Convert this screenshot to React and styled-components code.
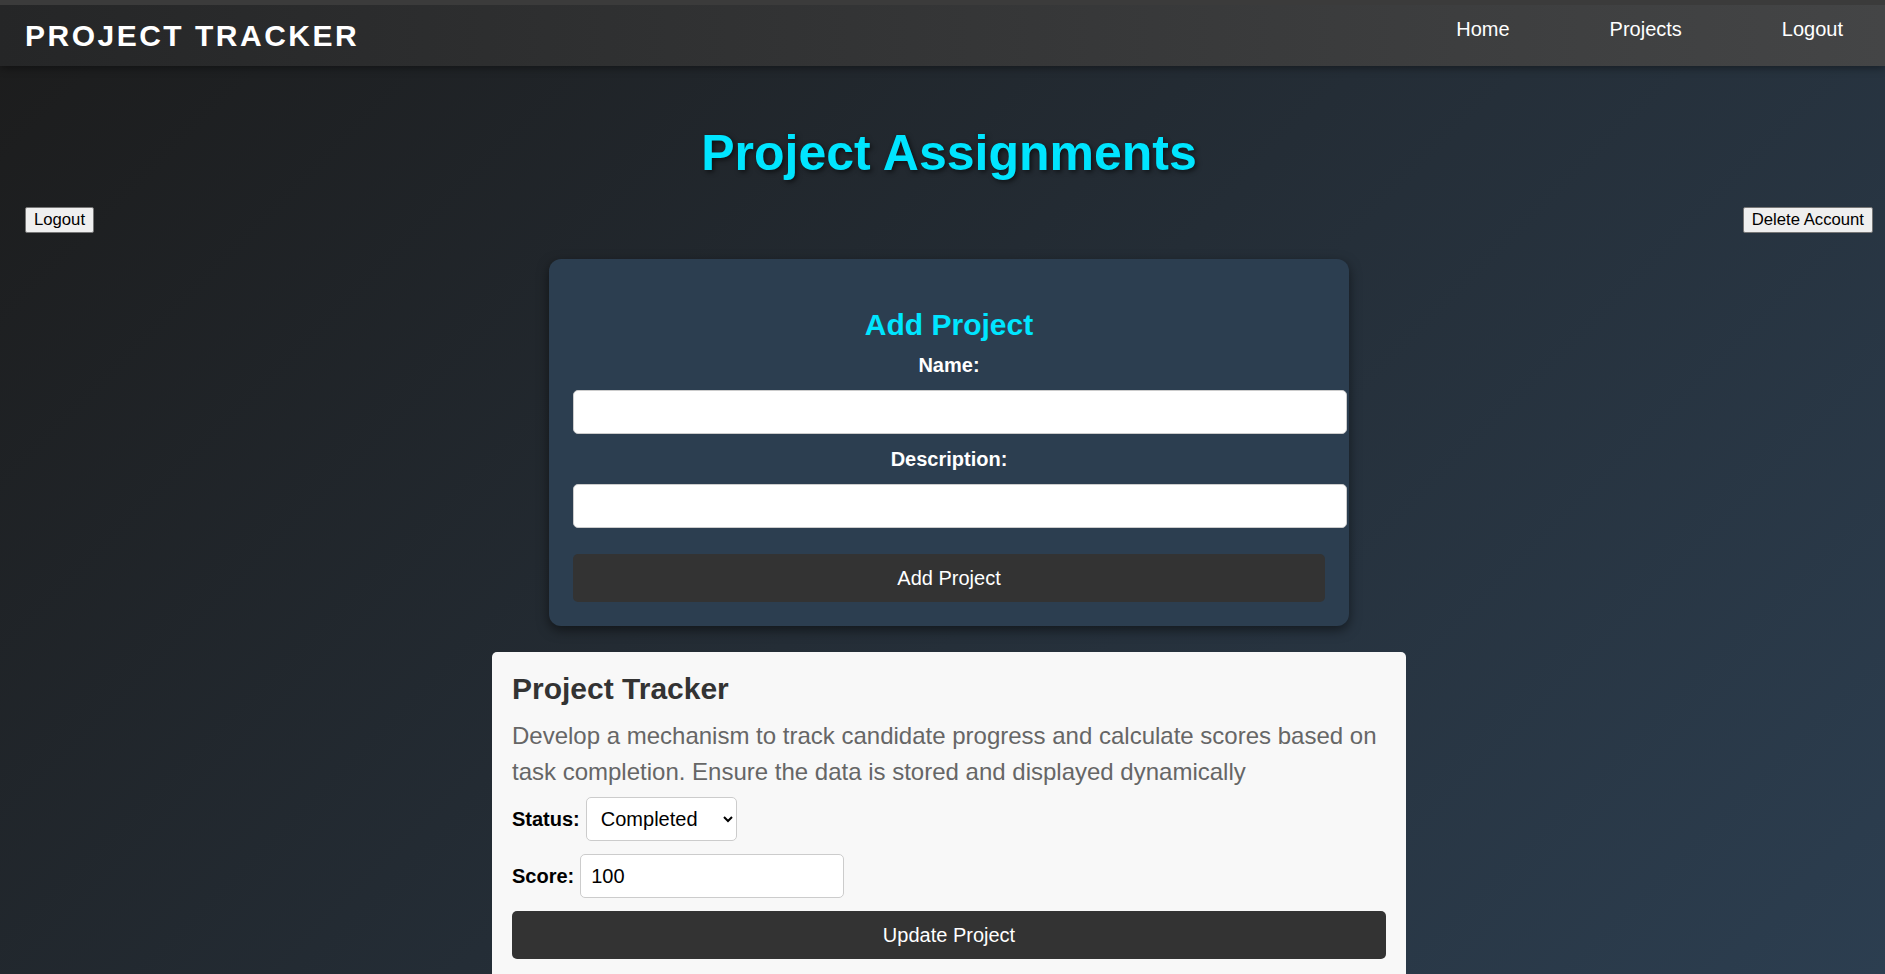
import React, { useState } from 'react'
import styled, { createGlobalStyle } from 'styled-components';

const GlobalStyle = createGlobalStyle`
  body {
    margin: 0;
    min-height: 100vh;
    font-family: "Liberation Sans", Arial, sans-serif;
    background: linear-gradient(135deg, #1c1c1c 0%, #2c3e50 100%);
    background-attachment: fixed;
  }
`;

function App() {
  const [status, setStatus] = useState('Completed');
  const [score, setScore] = useState('100');

  return (
    <>
      <GlobalStyle />
      <NavBar>
        <Brand>PROJECT TRACKER</Brand>
        <NavLinks>
          <a href="#home">Home</a>
          <a href="#projects">Projects</a>
          <a href="#logout">Logout</a>
        </NavLinks>
      </NavBar>
      <Main>
        <PageTitle>Project Assignments</PageTitle>
        <ActionRow>
          <PlainButton>Logout</PlainButton>
          <PlainButton>Delete Account</PlainButton>
        </ActionRow>

        <AddCard>
          <h2>Add Project</h2>
          <label htmlFor="name">Name:</label>
          <TextField id="name" type="text" />
          <label htmlFor="desc">Description:</label>
          <TextField id="desc" type="text" $last />
          <DarkButton>Add Project</DarkButton>
        </AddCard>

        <ProjectCard>
          <h3>Project Tracker</h3>
          <p>
            Develop a mechanism to track candidate progress and calculate scores based on
            task completion. Ensure the data is stored and displayed dynamically
          </p>
          <FieldRow>
            <span>Status:</span>
            <StatusSelect value={status} onChange={(e) => setStatus(e.target.value)}>
              <option>Pending</option>
              <option>In Progress</option>
              <option>Completed</option>
            </StatusSelect>
          </FieldRow>
          <FieldRow>
            <span>Score:</span>
            <ScoreInput type="number" value={score} onChange={(e) => setScore(e.target.value)} />
          </FieldRow>
          <DarkButton>Update Project</DarkButton>
        </ProjectCard>
      </Main>
    </>
  )
}

const NavBar = styled.nav`
  display: flex;
  justify-content: space-between;
  align-items: center;
  height: 61px;
  padding: 0 42px 0 25px;
  border-top: 5px solid #3b3b3b;
  background: linear-gradient(90deg, #252627 0%, #444546 100%);
  box-shadow: 0 2px 8px rgba(0, 0, 0, 0.4);
`;

const Brand = styled.div`
  color: #fff;
  font-size: 30px;
  font-weight: bold;
  letter-spacing: 2.5px;
`;

const NavLinks = styled.div`
  display: flex;
  gap: 100px;
  padding-bottom: 12px;

  a {
    color: #fff;
    font-size: 20px;
    text-decoration: none;
  }
`;

const Main = styled.main`
  padding: 0 12px 40px 25px;
`;

const PageTitle = styled.h1`
  margin: 58px 0 0;
  text-align: center;
  color: #00e5ff;
  font-size: 50px;
  font-weight: bold;
  text-shadow: 2px 2px 5px rgba(0, 0, 0, 0.6);
`;

const ActionRow = styled.div`
  display: flex;
  justify-content: space-between;
  margin-top: 25px;
`;

const PlainButton = styled.button`
  height: 26px;
  padding: 0 8px;
  font-family: inherit;
  font-size: 16.7px;
  color: #000;
  background: #efefef;
  border: 1px solid #767676;
  border-radius: 2px;
`;

const AddCard = styled.section`
  box-sizing: border-box;
  width: 800px;
  margin: 26px auto 0;
  padding: 24px;
  background: #2c3e50;
  border-radius: 12px;
  box-shadow: 0 4px 12px rgba(0, 0, 0, 0.5);

  h2 {
    margin: 25px 0 12px;
    text-align: center;
    color: #00e5ff;
    font-size: 30px;
  }

  label {
    display: block;
    margin-bottom: 13px;
    text-align: center;
    color: #fff;
    font-size: 20px;
    font-weight: bold;
  }
`;

const TextField = styled.input`
  display: block;
  width: 100%;
  height: 22px;
  margin: 0 0 ${(p) => (p.$last ? '26px' : '14px')};
  padding: 10px;
  font-family: inherit;
  font-size: 20px;
  background: #fff;
  border: 1px solid #ccc;
  border-radius: 5px;
`;

const DarkButton = styled.button`
  display: block;
  box-sizing: border-box;
  width: 100%;
  height: 48px;
  font-family: inherit;
  font-size: 20px;
  color: #fff;
  background: #333;
  border: none;
  border-radius: 5px;
`;

const ProjectCard = styled.section`
  box-sizing: border-box;
  width: 914px;
  margin: 26px auto 0;
  padding: 20px;
  background: #f8f8f8;
  border-radius: 5px;

  h3 {
    margin: 0 0 12px;
    color: #333;
    font-size: 30px;
  }

  p {
    margin: 0 0 7px;
    color: #666;
    font-size: 24px;
    line-height: 36px;
  }
`;

const FieldRow = styled.div`
  display: flex;
  align-items: center;
  gap: 6px;
  margin-bottom: 13px;

  span {
    font-size: 20px;
    font-weight: bold;
    color: #000;
  }
`;

const StatusSelect = styled.select`
  box-sizing: border-box;
  width: 151px;
  height: 44px;
  padding: 0 10px;
  font-family: inherit;
  font-size: 20px;
  color: #000;
  background: #fff;
  border: 1px solid #ccc;
  border-radius: 5px;
`;

const ScoreInput = styled.input`
  box-sizing: border-box;
  width: 264px;
  height: 44px;
  padding: 0 10px;
  font-family: inherit;
  font-size: 20px;
  color: #000;
  background: #fff;
  border: 1px solid #ccc;
  border-radius: 5px;
  -moz-appearance: textfield;

  &::-webkit-outer-spin-button,
  &::-webkit-inner-spin-button {
    -webkit-appearance: none;
    margin: 0;
  }
`;

export default App;
